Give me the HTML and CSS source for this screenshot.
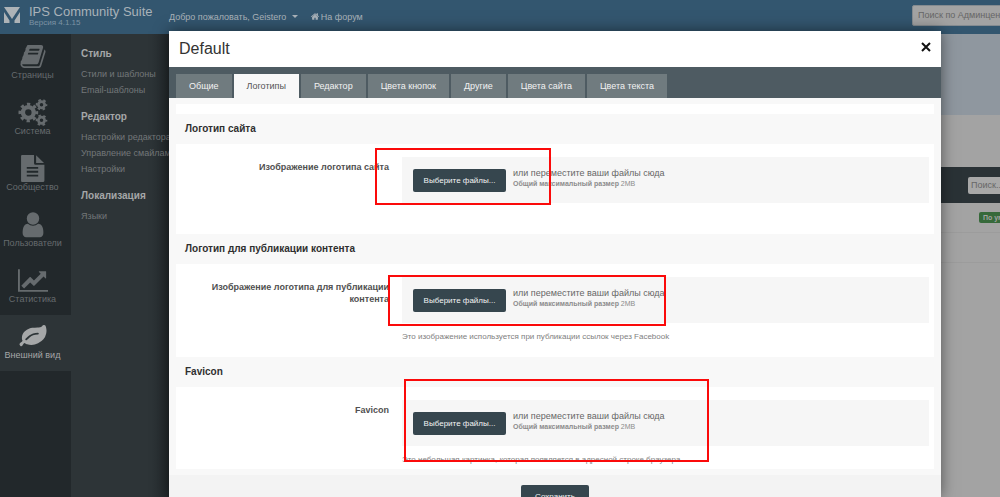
FILE: index.html
```html
<!DOCTYPE html>
<html lang="ru">
<head>
<meta charset="utf-8">
<title>IPS Community Suite</title>
<link rel="stylesheet" href="styles.css">
</head>
<body>
<div class="app">
  <header class="topbar">
    <svg class="logo" viewBox="0 0 16 16"><path d="M0 0H16L8 12Z"/><path d="M0 5L5.500 13.500V16H0ZM16 5L10.500 13.500V16H16Z"/></svg>
    <div class="brand">
      <span class="brand-name">IPS Community Suite</span>
      <span class="brand-version">Версия 4.1.15</span>
    </div>
    <nav class="topnav">
      <a href="#user">Добро пожаловать, Geistero <span class="caret"></span></a>
      <a href="#forum"><svg class="home" viewBox="0 0 1792 1792"><path d="M1472 992v480q0 26-19 45t-45 19h-384v-384h-256v384h-384q-26 0-45-19t-19-45v-480q0-1 .5-3t.5-3l575-474 575 474q1 2 1 6zm223-69l-62 74q-8 9-21 11h-3q-13 0-21-7l-692-577-692 577q-12 8-24 7-13-2-21-11l-62-74q-8-10-7-23.500t11-21.500l719-599q32-26 76-26t76 26l244 204v-195q0-14 9-23t23-9h192q14 0 23 9t9 23v408l219 182q10 8 11 21.500t-7 23.500z"/></svg>На форум</a>
    </nav>
    <input class="top-search" type="text" aria-label="Поиск по Админцентру" placeholder="Поиск по Админцентру">
  </header>
  <div class="columns">
    <nav class="sidebar">
      <a href="#pages"><svg viewBox="0 0 1792 1792"><path d="M1703 478q40 57 18 129l-275 906q-19 64-76.500 107.500t-122.500 43.500h-923q-77 0-148.500-53.500t-99.500-131.500q-24-67-2-127 0-4 3-27t4-37q1-8-3-21.500t-3-19.500q2-11 8-21t16.500-23.500 16.500-23.500q23-38 45-91.500t30-91.500q3-10 .5-30t-.5-28q3-11 17-28t17-23q21-36 42-92t25-90q1-9-2.500-32t.5-28q4-13 22-30.500t22-22.500q19-26 42.500-84.500t27.500-96.500q1-8-3-25.500t-2-26.500q2-8 9-18t18-23 17-21q8-12 16.500-30.500t15-35 16-36 19.500-32 26.500-23.500 36-11.500 47.500 5.500l-1 3q38-9 51-9h761q74 0 114 56t18 130l-274 906q-36 119-71.500 153.500t-128.500 34.500h-869q-27 0-38 15-11 16-1 43 24 70 144 70h923q29 0 56-15.500t35-41.500l300-987q7-22 5-57 38 15 59 43zm-1064 2q-4 13 2 22.500t20 9.500h608q13 0 25.500-9.500t16.500-22.500l21-64q4-13-2-22.500t-20-9.500h-608q-13 0-25.500 9.500t-16.500 22.500zm-83 256q-4 13 2 22.500t20 9.500h608q13 0 25.500-9.500t16.500-22.500l21-64q4-13-2-22.500t-20-9.500h-608q-13 0-25.500 9.500t-16.500 22.500z"/></svg>Страницы</a>
      <a href="#system"><svg viewBox="0 0 28 26"><g fill="none" stroke="currentColor"><circle cx="9.500" cy="13" r="5.200" stroke-width="4.200"/><circle cx="9.500" cy="13" r="8" stroke-width="3" stroke-dasharray="3.140 3.143" stroke-dashoffset="1.570"/><circle cx="22.200" cy="5.500" r="3" stroke-width="2.600"/><circle cx="22.200" cy="5.500" r="4.600" stroke-width="2" stroke-dasharray="2.400 2.417" stroke-dashoffset="1.200"/><circle cx="22.200" cy="20.500" r="3" stroke-width="2.600"/><circle cx="22.200" cy="20.500" r="4.600" stroke-width="2" stroke-dasharray="2.400 2.417" stroke-dashoffset="1.200"/></g></svg>Система</a>
      <a href="#community"><svg viewBox="0 0 26 26"><path fill-rule="evenodd" d="M2.500 0H14V8Q14 9.500 15.500 9.500H24V24.500Q24 26 22.500 26H2.500Q1.500 26 1.500 25V1Q1.500 0 2.500 0ZM7 11.500V13.200H18V11.500ZM7 15.200V17H18V15.200ZM7 19V20.800H18V19Z"/><path d="M16 .3L23.600 7.700H16Z"/></svg>Сообщество</a>
      <a href="#users"><svg viewBox="96 48 1600 1664"><path d="M1536 1399q0 109-62.500 187t-150.500 78h-854q-88 0-150.500-78t-62.500-187q0-85 8.500-160.500t31.500-152 58.500-131 94-89 134.500-34.500q131 128 313 128t313-128q76 0 134.500 34.500t94 89 58.500 131 31.500 152 8.500 160.500zm-256-887q0 159-112.500 271.500t-271.500 112.500-271.500-112.500-112.500-271.500 112.500-271.500 271.500-112.500 271.500 112.500 112.500 271.500z"/></svg>Пользователи</a>
      <a href="#stats"><svg viewBox="0 0 2048 1792"><path d="M2048 1536v128h-2048v-1536h128v1408h1920zm-128-1248v435q0 21-19.500 29.500t-35.500-7.500l-121-121-633 633q-10 10-23 10t-23-10l-233-233-416 416-192-192 585-585q10-10 23-10t23 10l233 233 464-464-121-121q-16-16-7.500-35.500t29.500-19.500h435q14 0 23 9t9 23z"/></svg>Статистика</a>
      <a class="active" href="#look"><svg viewBox="0 0 1792 1792"><path d="M1280 704q0-26-19-45t-45-19q-172 0-318 49.500t-259.500 134-235.500 219.500q-19 21-19 45 0 26 19 45t45 19q24 0 45-19 27-24 74-71t67-66q137-124 268.500-176t313.500-52q26 0 45-19t19-45zm512-198q0 95-20 193-46 224-184.500 383t-357.500 268q-214 108-438 108-148 0-286-47-15-5-88-42t-96-37q-16 0-39.500 32t-45 70-52.500 70-60 32q-43 0-63.500-17.500t-45.500-59.500q-2-4-6-11t-5.500-10-3-9.500-1.500-13.500q0-35 31-73.500t68-65.500 68-56 31-48q0-4-14-38t-16-44q-9-51-9-104 0-115 43.500-220t119-184.500 170.500-139 204-95.500q55-18 145-25.500t179.500-9 178.500-6 163.500-24 113.500-56.500l29.500-29.500 29.500-28 27-20 36.500-16 43.500-4.500q39 0 70.500 46t47.500 112 24 124 8 96z"/></svg>Внешний вид</a>
    </nav>
    <nav class="submenu">
      <h3>Стиль</h3>
      <a href="#styles">Стили и шаблоны</a>
      <a href="#email">Email-шаблоны</a>
      <h3>Редактор</h3>
      <a href="#editor">Настройки редактора</a>
      <a href="#smiles">Управление смайлами</a>
      <a href="#settings">Настройки</a>
      <h3>Локализация</h3>
      <a href="#languages">Языки</a>
    </nav>
    <main class="content">
      <div class="banner"></div>
      <div class="spacer"></div>
      <div class="toolbar"><input type="text" aria-label="Поиск" placeholder="Поиск..."></div>
      <div class="row"><span class="badge">По умолчанию</span></div>
      <div class="row"></div>
    </main>
  </div>
</div>

<section class="modal" role="dialog" aria-labelledby="dialog-title">
  <header class="modal-head">
    <h1 id="dialog-title">Default</h1>
    <button class="close" type="button" aria-label="Закрыть"><svg viewBox="0 0 10 10"><path d="M1 1L9 9M9 1L1 9"/></svg></button>
  </header>
  <div class="tabs" role="tablist">
    <button type="button" role="tab">Общие</button>
    <button type="button" role="tab" class="selected" aria-selected="true">Логотипы</button>
    <button type="button" role="tab">Редактор</button>
    <button type="button" role="tab">Цвета кнопок</button>
    <button type="button" role="tab">Другие</button>
    <button type="button" role="tab">Цвета сайта</button>
    <button type="button" role="tab">Цвета текста</button>
  </div>
  <form class="form" id="logos">
    <div class="strip"></div>
    <h2>Логотип сайта</h2>
    <div class="field field-tall">
      <label for="logo">Изображение логотипа сайта</label>
      <div class="control">
        <div class="upload">
          <button class="btn" id="logo" type="button">Выберите файлы...</button>
          <div class="hint"><p>или переместите ваши файлы сюда</p><small><b>Общий максимальный размер</b> 2MB</small></div>
        </div>
      </div>
    </div>
    <h2>Логотип для публикации контента</h2>
    <div class="field field-mid">
      <label for="share">Изображение логотипа для публикации контента</label>
      <div class="control">
        <div class="upload">
          <button class="btn" id="share" type="button">Выберите файлы...</button>
          <div class="hint"><p>или переместите ваши файлы сюда</p><small><b>Общий максимальный размер</b> 2MB</small></div>
        </div>
        <p class="note">Это изображение используется при публикации ссылок через Facebook</p>
      </div>
    </div>
    <h2>Favicon</h2>
    <div class="field">
      <label for="favicon">Favicon</label>
      <div class="control">
        <div class="upload">
          <button class="btn" id="favicon" type="button">Выберите файлы...</button>
          <div class="hint"><p>или переместите ваши файлы сюда</p><small><b>Общий максимальный размер</b> 2MB</small></div>
        </div>
        <p class="note">Это небольшая картинка, которая появляется в адресной строке браузера.</p>
      </div>
    </div>
  </form>
  <footer class="modal-foot"><button class="btn save" type="submit" form="logos">Сохранить</button></footer>
  <div class="mark mark-logo"></div>
  <div class="mark mark-share"></div>
  <div class="mark mark-favicon"></div>
</section>
</body>
</html>
```
FILE: styles.css
```css
* { box-sizing: border-box; }
body {
  margin: 0;
  position: relative;
  min-height: 100vh;
  overflow: hidden;
  font-family: "Liberation Sans", Arial, sans-serif;
  font-size: 9px;
  color: #333;
}
h1, h2, h3, p { margin: 0; }
a { color: inherit; text-decoration: none; }
button, input { font: inherit; }
.app { display: flex; flex-direction: column; min-height: 100vh; }

.topbar {
  display: flex;
  align-items: center;
  height: 34px;
  background: #33566f;
  color: #a9b2b9;
  overflow: hidden;
}
.logo { width: 16px; height: 16px; margin: 0 9px 4px 4px; fill: #adb3b7; flex: none; }
.brand { display: flex; flex-direction: column; width: 140px; flex: none; padding-bottom: 5px; white-space: nowrap; }
.brand-name { font-size: 13px; line-height: 13px; padding-top: 2px; }
.brand-version { font-size: 8px; line-height: 9px; color: #7c93a4; }
.topnav { display: flex; gap: 12px; flex: 1; white-space: nowrap; }
.caret { display: inline-block; margin: 0 0 2px 3px; border: 3px solid transparent; border-top-color: currentColor; border-bottom: 0; }
.home { width: 10px; height: 9px; fill: currentColor; margin-right: 1px; vertical-align: -1px; }
.top-search {
  width: 120px;
  height: 21px;
  margin: 0 -32px 4px 0;
  padding: 0 5px;
  border: 1px solid #858b90;
  border-radius: 2px;
  background: #a3a3a3;
  flex: none;
}
input::placeholder { color: #666; opacity: 1; }

.columns { display: flex; flex: 1; }
.sidebar { width: 71px; background: #22282b; padding-top: 1px; flex: none; }
.sidebar a {
  display: flex;
  flex-direction: column;
  align-items: center;
  height: 56px;
  padding: 8px 6px 0 0;
  line-height: 11px;
  color: #666b6e;
}
.sidebar svg { width: 30px; height: 27px; fill: currentColor; }
.sidebar .active { background: #2d3437; color: #a5a7a8; }
.submenu {
  flex: none;
  width: 130px;
  padding: 14px 10px;
  background: linear-gradient(to right, #2d3437 80px, #22282b 98px);
  color: #737779;
  white-space: nowrap;
}
.submenu h3 { font-size: 10px; line-height: 11px; font-weight: bold; color: #a5a7a8; margin-bottom: 7px; }
.submenu a { display: block; line-height: 16px; }
.submenu a + h3 { margin-top: 13px; }
.content { flex: 1; background: #a3a3a3; overflow: hidden; }
.banner { height: 81px; background: #8f979f; }
.spacer { height: 52px; }
.toolbar { display: flex; justify-content: flex-end; align-items: center; height: 36px; background: #2a3236; }
.toolbar input { width: 60px; height: 17px; margin-right: -28px; padding: 0 3px; border: 0; border-radius: 2px; background: #a8a8a8; }
.row { display: flex; justify-content: flex-end; height: 30px; padding-top: 9px; border-bottom: 1px solid #9c9c9c; }
.badge { height: 11px; margin-right: -38px; padding: 0 4px; border-radius: 2px; background: #36693a; color: #a3a3a3; font-size: 7px; line-height: 11px; font-weight: bold; }

.modal {
  position: absolute;
  top: 31px;
  right: 59px;
  bottom: 0;
  left: 169px;
  overflow: hidden;
  background: #f8f8f8;
  box-shadow: 0 0 14px rgba(0, 0, 0, .5);
}
.modal-head { display: flex; justify-content: space-between; align-items: center; height: 36px; padding: 0 10px; background: #fff; }
.modal-head h1 { font-size: 16px; line-height: 20px; font-weight: normal; }
.close { width: 10px; height: 10px; margin-bottom: 5px; padding: 0; border: 0; background: none; }
.close svg { display: block; width: 10px; height: 10px; stroke: #111; stroke-width: 2; }
.tabs { display: flex; gap: 2px; padding: 7px 7px 0; background: #4e5b62; }
.tabs button { height: 24px; padding: 0 13px; border: 0; background: #707b7f; color: #f2f2f2; white-space: nowrap; }
.tabs .selected { background: #f8f8f8; color: #555; }
.form { padding: 6px 7px; }
.strip { height: 10px; background: #fff; }
.form h2 { padding: 0 9px; font-size: 10px; line-height: 30px; font-weight: bold; color: #2f2f2f; }
.field { display: grid; grid-template-columns: 213px 1fr; gap: 13px; padding: 13px 5px 4px 0; background: #fff; }
.field-tall { padding-bottom: 31px; }
.field-mid { padding-bottom: 15px; }
.field label { padding-top: 4px; text-align: right; line-height: 12px; font-weight: bold; color: #505050; }
.upload { display: flex; align-items: center; gap: 7px; height: 46px; padding-left: 11px; background: #f6f6f6; }
.btn { height: 23px; width: 93px; padding: 0; border: 0; border-radius: 2px; background: #36464e; color: #f4f4f4; font-size: 8px; }
.hint { padding-bottom: 5px; line-height: 11px; color: #666; }
.hint p { font-size: 9px; }
.hint small { display: block; font-size: 7px; line-height: 9px; color: #8c8c8c; }
.note { padding-top: 9px; font-size: 8px; line-height: 10px; color: #808080; }
.modal-foot { display: flex; justify-content: center; padding: 10px; background: #f3f3f3; }
.save { width: 68px; }

.mark { position: absolute; border: 2px solid #fb0a0a; pointer-events: none; }
.mark-logo { left: 206px; top: 117px; width: 176px; height: 57px; }
.mark-share { left: 219px; top: 244px; width: 278px; height: 51px; }
.mark-favicon { left: 235px; top: 348px; width: 305px; height: 83px; }
```
